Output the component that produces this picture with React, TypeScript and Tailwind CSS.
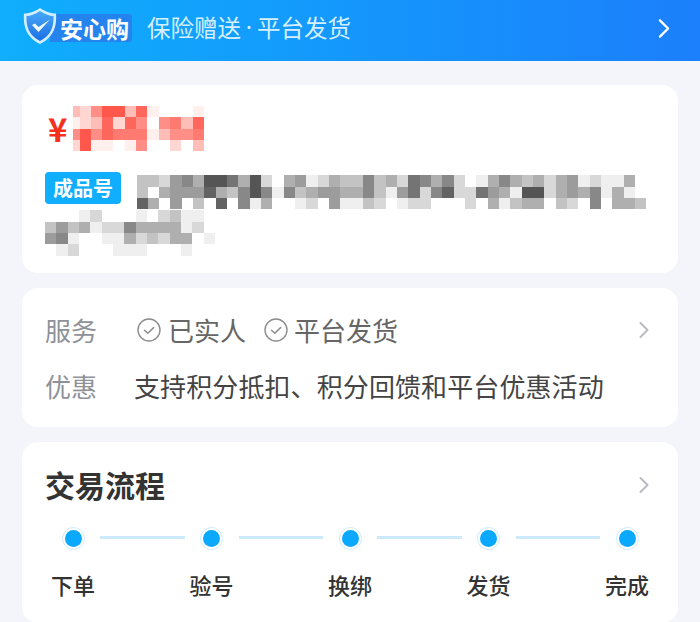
const FONT = "font-['Noto_Sans_CJK_SC','Noto_Sans',sans-serif]";

const GRAYS = ["transparent", "#efefef", "#d8d8d8", "#c3c3c3", "#afafaf", "#9c9c9c", "#888888", "#747474", "#636363", "#555555"];
const REDS = ["transparent", "#fff0ee", "#ffd6d2", "#ffbdb7", "#ffa59e", "#ff8f86", "#ff7a70", "#ff675c", "#ff574c"];

// blurred-out values, one digit per cell
const PRICE = ["325883710001", "123727505637", "585766613556", "281101500203"];

const TITLE_ROWS = [
  "332564997492045124" + "33634" + "2764620" + "1464342" + "45121140",
  "304555843696163455" + "44631" + "5726822" + "7541992" + "45461410",
  "840503080614001205" + "11320" + "1220002" + "0413440" + "32060443",
];

const WRAP_ROWS = ["000120001023110", "353412264444120", "561001142324401", "012000111000100"];

const STEPS = ["下单", "验号", "换绑", "发货", "完成"];

function Mosaic({
  rows,
  colors,
  first,
}: {
  rows: string[];
  colors: string[];
  first?: number;
}) {
  const cell = 11.33;
  return (
    <div className="flex flex-col blur-[0.3px]">
      {rows.map((row, i) => (
        <div key={i} className="flex">
          {row.split("").map((c, j) => (
            <div
              key={j}
              style={{
                width: j === 0 && first ? first : cell,
                height: cell,
                backgroundColor: colors[Number(c)],
              }}
            />
          ))}
        </div>
      ))}
    </div>
  );
}

function Chevron({ className }: { className: string }) {
  return (
    <svg viewBox="0 0 12 18" fill="none" className={className}>
      <path d="M2.5 2 L9.5 9 L2.5 16" stroke="currentColor" strokeWidth="2" strokeLinecap="round" strokeLinejoin="round" />
    </svg>
  );
}

function CheckCircle() {
  return (
    <svg viewBox="0 0 24 24" fill="none" className="w-6 h-6 shrink-0 text-[#8d8d8d]">
      <circle cx="12" cy="12" r="11" stroke="currentColor" strokeWidth="1.4" />
      <path d="M7.5 12.2 L10.8 15.2 L16.6 9.6" stroke="currentColor" strokeWidth="1.5" strokeLinecap="round" strokeLinejoin="round" />
    </svg>
  );
}

function Logo() {
  return (
    <div className="flex items-center">
      <svg viewBox="0 0 36 38" className="w-9 h-[38px] shrink-0 relative z-10 -mt-[5px]">
        <defs>
          <linearGradient id="shield" x1="0" y1="0" x2="0" y2="1">
            <stop offset="0" stopColor="#49a8f8" />
            <stop offset="1" stopColor="#1b6fe4" />
          </linearGradient>
        </defs>
        <path d="M18 1 C24 5 29 6.500 34 6.500 C35 19 32 30 18 37 C4 30 1 19 2 6.500 C7 6.500 12 5 18 1 Z" fill="#d3efff" />
        <path d="M18 4 C23.500 7.500 27.500 8.800 31.500 9 C32 19.500 29 28.500 18 34 C7 28.500 4 19.500 4.500 9 C8.500 8.800 12.500 7.500 18 4 Z" fill="url(#shield)" />
        <path d="M10 18 L16.500 25 L28 12.500 L16.500 20 L13 16.500 Z" fill="#eef9ff" />
      </svg>
      <div className="-ml-[8px] h-7 w-[82px] rounded-r-[3px] bg-[#2583ee] flex items-center justify-end pr-[3px] text-white text-[23px] font-bold leading-none">
        安心购
      </div>
    </div>
  );
}

export default function App() {
  return (
    <div className={`${FONT} w-[700px] h-[622px] overflow-hidden bg-[#f4f5fa]`}>
      <div className="h-[61px] pb-[5px] bg-gradient-to-r from-[#10aefc] to-[#1c7ffb] flex items-center pl-[22px] pr-[29px]">
        <Logo />
        <div className="ml-[15px] flex items-center text-[23.5px] text-[#d5efff] leading-none">
          <span>保险赠送</span>
          <span className="w-[16px] text-center font-['Noto_Sans',sans-serif]">·</span>
          <span>平台发货</span>
        </div>
        <Chevron className="ml-auto w-[14px] h-[21px] text-white" />
      </div>

      <div className="px-[22px] pt-6 flex flex-col gap-[15px]">
        <div className="h-[188px] bg-white rounded-2xl pt-[21px] pl-[23px]">
          <div className="flex items-center">
            <span className="text-[33px] font-bold text-[#f5301f] leading-none w-[28px] pl-[3px]">¥</span>
            <Mosaic rows={PRICE} colors={REDS} first={6.5} />
          </div>
          <div className="mt-[21px] flex items-start">
            <div className="w-[76px] h-8 bg-[#10aefc] rounded-[4px] text-white text-[20px] font-bold leading-8 text-center shrink-0">
              成品号
            </div>
            <div className="ml-[15.5px] mt-[3px]">
              <Mosaic rows={TITLE_ROWS} colors={GRAYS} />
            </div>
          </div>
          <div className="mt-[1px]">
            <Mosaic rows={WRAP_ROWS} colors={GRAYS} />
          </div>
        </div>

        <div className="h-[139px] bg-white rounded-2xl pl-[23px] pr-[28px] pt-[23px] text-[26px] leading-[38px]">
          <div className="flex items-center">
            <span className="w-[90px] text-[#8f9199]">服务</span>
            <span className="ml-[2px]"><CheckCircle /></span>
            <span className="ml-[7px] text-[#666666]">已实人</span>
            <span className="ml-[18px]"><CheckCircle /></span>
            <span className="ml-[6px] text-[#666666]">平台发货</span>
            <Chevron className="ml-auto w-[12px] h-[18px] text-[#b9bac2]" />
          </div>
          <div className="flex items-center mt-[18px]">
            <span className="w-[89px] text-[#8f9199]">优惠</span>
            <span className="text-[#444444] tracking-[0.1px]">支持积分抵扣、积分回馈和平台优惠活动</span>
          </div>
        </div>

        <div className="h-[181px] bg-white rounded-2xl pl-[23px] pr-[28px] pt-[21px]">
          <div className="flex items-center justify-between">
            <span className="text-[30px] leading-[42px] font-bold text-[#333333]">交易流程</span>
            <Chevron className="w-[12px] h-[18px] mt-[2px] text-[#b9bac2]" />
          </div>
          <div className="mt-[22px] ml-[6px] w-[598px] flex items-center">
            {STEPS.map((s, i) => (
              <div key={s} className="contents">
                {i > 0 && <div className="flex-1 mx-[5px] h-[3px] -mt-[2px] bg-[#cdeafc]" />}
                <div className="w-11 flex justify-center">
                  <div className="w-[23px] h-[23px] rounded-full border-[1.5px] border-[#cdebfd] p-[2px]">
                    <div className="w-full h-full rounded-full bg-[#0aa9fd]" />
                  </div>
                </div>
              </div>
            ))}
          </div>
          <div className="mt-[20px] ml-[6px] w-[598px] flex justify-between text-[22px] leading-[28px] font-medium text-[#333333]">
            {STEPS.map((s) => (
              <span key={s}>{s}</span>
            ))}
          </div>
        </div>
      </div>
    </div>
  );
}
